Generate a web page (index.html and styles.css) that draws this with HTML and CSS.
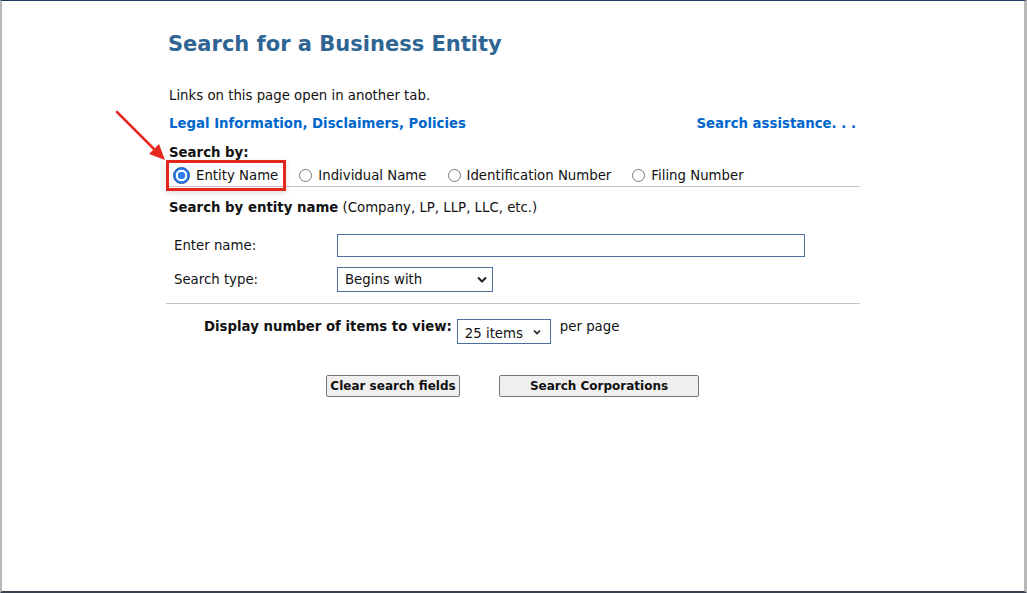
FILE: index.html
```html
<!DOCTYPE html>
<html lang="en">
<head>
    <meta charset="UTF-8">
    <meta name="viewport" content="width=device-width, initial-scale=1.0">
    <title>Search for a Business Entity</title>
    <link rel="stylesheet" href="styles.css">
</head>
<body>
    <div class="frame">
        <svg class="arrow" width="60" height="60" viewBox="0 0 60 60">
            <line x1="4" y1="3" x2="44" y2="43" stroke="#e8281e" stroke-width="2.5" stroke-linecap="round"/>
            <polygon points="52,51 36,45 46,35" fill="#e8281e"/>
        </svg>
        <div class="container">
            <h1>Search for a Business Entity</h1>
            <p class="intro">Links on this page open in another tab.</p>
            <div class="links">
                <a href="#">Legal Information, Disclaimers, Policies</a>
                <a href="#">Search assistance. . .</a>
            </div>
            <div class="search-by">Search by:</div>
            <div class="radios">
                <label class="radio highlight"><input type="radio" name="by" checked> Entity Name</label>
                <label class="radio"><input type="radio" name="by"> Individual Name</label>
                <label class="radio"><input type="radio" name="by"> Identification Number</label>
                <label class="radio"><input type="radio" name="by"> Filing Number</label>
            </div>
            <p class="section-title"><b>Search by entity name</b> (Company, LP, LLP, LLC, etc.)</p>
            <div class="fields">
                <label for="entityName">Enter name:</label>
                <input type="text" id="entityName" class="name-input">
                <label for="searchType">Search type:</label>
                <span class="select-wrap type-select">
                    <select id="searchType">
                        <option>Begins with</option>
                        <option>Contains</option>
                        <option>Exact match</option>
                    </select>
                    <svg class="chevron" width="10" height="7" viewBox="0 0 10 7"><path d="M1 1.5 L5 5.5 L9 1.5" fill="none" stroke="#222" stroke-width="2"/></svg>
                </span>
            </div>
            <div class="display-row">
                <b>Display number of items to view:</b>
                <span class="select-wrap items-select">
                    <select>
                        <option>25 items</option>
                        <option>50 items</option>
                        <option>100 items</option>
                    </select>
                    <svg class="chevron" width="8" height="6" viewBox="0 0 8 6"><path d="M1 1.5 L4 4.5 L7 1.5" fill="none" stroke="#222" stroke-width="1.6"/></svg>
                </span>
                <span class="per-page">per page</span>
            </div>
            <div class="buttons">
                <button type="button" class="clear-btn">Clear search fields</button>
                <button type="button" class="search-btn">Search Corporations</button>
            </div>
        </div>
    </div>
</body>
</html>
```

FILE: styles.css
```css
body {
    margin: 0;
    font-family: "DejaVu Sans", Verdana, sans-serif;
    font-size: 13.3px;
    color: #111;
    background-color: #ffffff;
}
.frame {
    position: relative;
    height: 593px;
    box-sizing: border-box;
    border-top: 1px solid #1d3b66;
    border-bottom: 2px solid #3a4250;
    border-left: 2px solid #b8b8b8;
    border-right: 3px solid #b8b8b8;
}
.arrow {
    position: absolute;
    left: 111px;
    top: 108px;
}
.container {
    width: 694px;
    margin: 0 auto;
}
h1 {
    margin: 0;
    padding: 30px 0 0 2px;
    font-size: 21px;
    line-height: 26px;
    color: #2f6593;
}
.intro {
    margin: 31px 0 0 3px;
    line-height: 16px;
}
.links {
    display: flex;
    justify-content: space-between;
    margin: 12px 4px 0 3px;
    line-height: 16px;
}
.links a {
    color: #0066cc;
    font-weight: bold;
    text-decoration: none;
}
.search-by {
    margin: 13px 0 0 3px;
    font-weight: bold;
    line-height: 16px;
}
.radios {
    display: flex;
    gap: 21px;
    padding: 6px 0 2px 7px;
    border-bottom: 1px solid #c4c4c4;
}
.radio {
    display: flex;
    align-items: center;
    gap: 6px;
    line-height: 17px;
}
.highlight {
    padding: 4px 5px 4px 4px;
    margin: -4px -5px -4px -4px;
    outline: 3px solid #e3261b;
    box-shadow: 0 2px 6px 3px rgba(0, 0, 0, 0.14);
}
.radio input {
    appearance: none;
    margin: 0;
    width: 13px;
    height: 13px;
    border: 1px solid #777;
    border-radius: 50%;
    background-color: #fff;
}
.radio input:checked {
    width: 17px;
    height: 17px;
    border: 1px solid #1a4d9a;
    background: radial-gradient(circle, #2f7ff2 0 3.5px, #fff 4px 5.5px, #2f7ff2 6px);
}
.section-title {
    margin: 13px 0 0 3px;
    line-height: 16px;
}
.fields {
    display: grid;
    grid-template-columns: 163px 468px;
    align-items: center;
    row-gap: 10px;
    padding: 18px 0 11px 8px;
    border-bottom: 1px solid #c4c4c4;
}
.name-input {
    height: 23px;
    box-sizing: border-box;
    border: 1px solid #4a6f9e;
    margin: 0;
    padding: 2px 6px;
    font: inherit;
}
.select-wrap {
    position: relative;
    display: inline-block;
    justify-self: start;
}
.select-wrap select {
    appearance: none;
    display: block;
    box-sizing: border-box;
    border: 1px solid #4a6f9e;
    border-radius: 0;
    background-color: #fff;
    margin: 0;
    font: inherit;
    color: #111;
}
.type-select select {
    width: 156px;
    height: 25px;
    padding: 0 7px;
}
.chevron {
    position: absolute;
    right: 6px;
    top: 9px;
}
.display-row {
    display: flex;
    align-items: flex-start;
    line-height: 16px;
    margin: 15px 0 0 38px;
}
.items-select {
    margin-left: 5px;
}
.items-select select {
    width: 94px;
    height: 25px;
    padding: 4px 7px 0;
}
.items-select .chevron {
    right: 10px;
    top: 10px;
}
.per-page {
    margin-left: 9px;
}
.buttons {
    display: flex;
    gap: 39px;
    margin: 31px 0 0 160px;
}
button {
    height: 22px;
    padding: 0;
    font-family: inherit;
    font-size: 12px;
    font-weight: bold;
    white-space: nowrap;
    color: #111;
    background-color: #efefef;
    border: 1px solid #767676;
    border-radius: 2px;
}
.clear-btn {
    width: 134px;
}
.search-btn {
    width: 200px;
}
```
